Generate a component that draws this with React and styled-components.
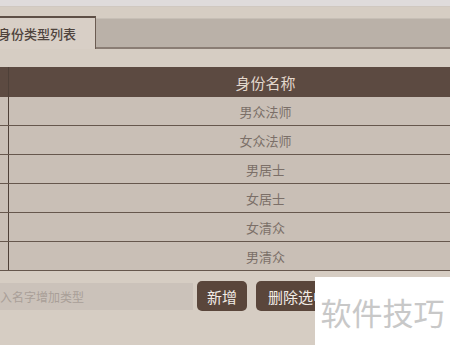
import React from "react";
import styled, { createGlobalStyle } from "styled-components";

const GlobalStyle = createGlobalStyle`
  html, body {
    margin: 0;
    padding: 0;
    background: #d6cdc3;
    overflow: hidden;
  }
  body {
    font-family: "Noto Sans CJK SC", "Noto Sans", sans-serif;
  }
`;

const Page = styled.div`
  position: relative;
  width: 450px;
  height: 345px;
  overflow: hidden;
`;

const TopStrip = styled.div`
  height: 6px;
  background: #dfdbdb;
  border-bottom: 1px solid #d0c8c0;
`;

const Content = styled.div`
  margin-left: -30px;
  width: 552px;
  padding-top: 9px;
`;

const TabBar = styled.div`
  display: flex;
  height: 33px;
`;

const Tab = styled.div`
  display: flex;
  align-items: center;
  box-sizing: border-box;
  padding: 0 18px 0 28px;
  width: 126px;
  background: #d8cfc6;
  border-top: 2px solid #5e4f46;
  border-right: 1px solid #6b5c52;
  color: #4f443d;
  font-size: 13px;
  font-weight: 500;
`;

const TabRest = styled.div`
  flex: 1;
  margin-top: 2px;
  background: #bab1a8;
  border-top: 1px solid #c7bfb6;
  border-bottom: 2px solid #8a7d74;
`;

const Table = styled.div`
  margin-top: 18px;
`;

const Row = styled.div`
  display: grid;
  grid-template-columns: 38px 1fr;
  height: ${(p) => (p.$head ? "30px" : "28px")};
  background: ${(p) => (p.$head ? "#5c4a41" : "#c9bfb6")};
  border-bottom: ${(p) => (p.$head ? "none" : "1px solid #66574d")};
`;

const Cell = styled.div`
  display: flex;
  align-items: center;
  justify-content: center;
  border-left: ${(p) => (p.$first ? "none" : "1px solid #4e4038")};
  color: ${(p) => (p.$head ? "#e3d8cd" : "#7b6f68")};
  font-size: ${(p) => (p.$head ? "15px" : "13px")};
`;

const Footer = styled.div`
  display: flex;
  align-items: center;
  gap: 9px;
  margin-top: 10px;
`;

const Input = styled.input`
  box-sizing: border-box;
  width: 223px;
  height: 27px;
  margin-right: -5px;
  padding: 0 0 0 18px;
  border: none;
  outline: none;
  background: #cbc2ba;
  font-family: inherit;
  font-size: 12px;
  &::placeholder {
    color: #a99f98;
  }
`;

const Button = styled.button`
  height: 30px;
  padding: 0 ${(p) => p.$pad || 10}px;
  border: none;
  border-radius: 5px;
  background: #5a463b;
  color: #f2ece6;
  font-family: inherit;
  font-size: 15px;
  white-space: nowrap;
`;

const Watermark = styled.div`
  position: absolute;
  left: 315px;
  top: 277px;
  width: 135px;
  height: 68px;
  background: #ffffff;
  display: flex;
  align-items: center;
  justify-content: center;
  color: #c8c8c8;
  font-size: 31px;
  letter-spacing: 0;
`;

const names = ["男众法师", "女众法师", "男居士", "女居士", "女清众", "男清众"];

export default function App() {
  return (
    <>
      <GlobalStyle />
      <Page>
        <TopStrip />
        <Content>
          <TabBar>
            <Tab>身份类型列表</Tab>
            <TabRest />
          </TabBar>
          <Table>
            <Row $head>
              <Cell $first $head />
              <Cell $head>身份名称</Cell>
            </Row>
            {names.map((n) => (
              <Row key={n}>
                <Cell $first />
                <Cell>{n}</Cell>
              </Row>
            ))}
          </Table>
          <Footer>
            <Input placeholder="输入名字增加类型" />
            <Button>新增</Button>
            <Button $pad={12}>删除选中</Button>
          </Footer>
        </Content>
        <Watermark>软件技巧</Watermark>
      </Page>
    </>
  );
}
